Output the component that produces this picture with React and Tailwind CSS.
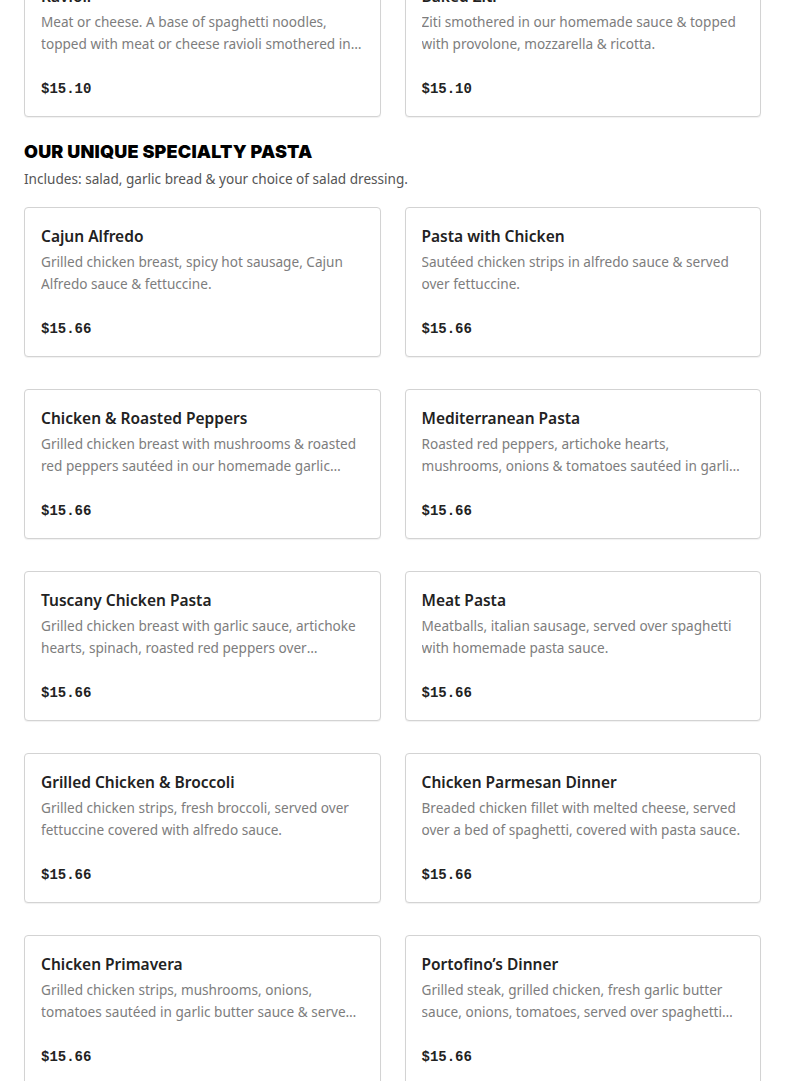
import React from 'react';

const topItems = [
  {
    name: 'Ravioli',
    description:
      'Meat or cheese. A base of spaghetti noodles, topped with meat or cheese ravioli smothered in our homemade sauce & baked with mozzarella.',
    price: '$15.10',
  },
  {
    name: 'Baked Ziti',
    description:
      'Ziti smothered in our homemade sauce & topped with provolone, mozzarella & ricotta.',
    price: '$15.10',
  },
];

const specialtyPasta = [
  {
    name: 'Cajun Alfredo',
    description: 'Grilled chicken breast, spicy hot sausage, Cajun Alfredo sauce & fettuccine.',
    price: '$15.66',
  },
  {
    name: 'Pasta with Chicken',
    description: 'Sautéed chicken strips in alfredo sauce & served over fettuccine.',
    price: '$15.66',
  },
  {
    name: 'Chicken & Roasted Peppers',
    description:
      'Grilled chicken breast with mushrooms & roasted red peppers sautéed in our homemade garlic butter sauce, served over fettuccine.',
    price: '$15.66',
  },
  {
    name: 'Mediterranean Pasta',
    description:
      'Roasted red peppers, artichoke hearts, mushrooms, onions & tomatoes sautéed in garlic butter sauce, served over spaghetti.',
    price: '$15.66',
  },
  {
    name: 'Tuscany Chicken Pasta',
    description:
      'Grilled chicken breast with garlic sauce, artichoke hearts, spinach, roasted red peppers over fettuccine.',
    price: '$15.66',
  },
  {
    name: 'Meat Pasta',
    description: 'Meatballs, italian sausage, served over spaghetti with homemade pasta sauce.',
    price: '$15.66',
  },
  {
    name: 'Grilled Chicken & Broccoli',
    description: 'Grilled chicken strips, fresh broccoli, served over fettuccine covered with alfredo sauce.',
    price: '$15.66',
  },
  {
    name: 'Chicken Parmesan Dinner',
    description:
      'Breaded chicken fillet with melted cheese, served over a bed of spaghetti, covered with pasta sauce.',
    price: '$15.66',
  },
  {
    name: 'Chicken Primavera',
    description:
      'Grilled chicken strips, mushrooms, onions, tomatoes sautéed in garlic butter sauce & served over fettuccine.',
    price: '$15.66',
  },
  {
    name: 'Portofino’s Dinner',
    description:
      'Grilled steak, grilled chicken, fresh garlic butter sauce, onions, tomatoes, served over spaghetti with alfredo sauce.',
    price: '$15.66',
  },
];

const MenuCard = ({ item }) => (
  <div className="flex flex-col h-[150px] bg-white border border-[#d3d3d3] rounded-[4px] shadow-[0_1px_1px_rgba(0,0,0,0.06)] px-4 pt-4 pb-[17px]">
    <h3 className="text-[15.5px] leading-6 font-semibold text-[#222]">{item.name}</h3>
    <p className="mt-[3px] text-[13.6px] leading-[22px] text-[#7d7d7d] line-clamp-2">
      {item.description}
    </p>
    <p className="mt-auto font-['Liberation_Mono',monospace] text-[14px] leading-5 font-bold text-[#222]">
      {item.price}
    </p>
  </div>
);

const App = () => {
  return (
    <div className="min-h-screen bg-white px-6 pb-10 font-['Noto_Sans',Arial,sans-serif]">
      {/* tail of previous section */}
      <div className="grid grid-cols-2 gap-x-6 gap-y-8 mt-[-33px]">
        {topItems.map((item) => (
          <MenuCard key={item.name} item={item} />
        ))}
      </div>

      {/* Specialty pasta */}
      <section className="mt-6">
        <h2 className="font-['Inter',sans-serif] text-[18px] leading-[22px] tracking-[0.01em] font-black uppercase text-black">
          Our Unique Specialty Pasta
        </h2>
        <p className="mt-[6px] text-[13.6px] leading-5 text-[#555]">
          Includes: salad, garlic bread &amp; your choice of salad dressing.
        </p>
        <div className="grid grid-cols-2 gap-x-6 gap-y-8 mt-[18px]">
          {specialtyPasta.map((item) => (
            <MenuCard key={item.name} item={item} />
          ))}
        </div>
      </section>
    </div>
  );
};

export default App;
